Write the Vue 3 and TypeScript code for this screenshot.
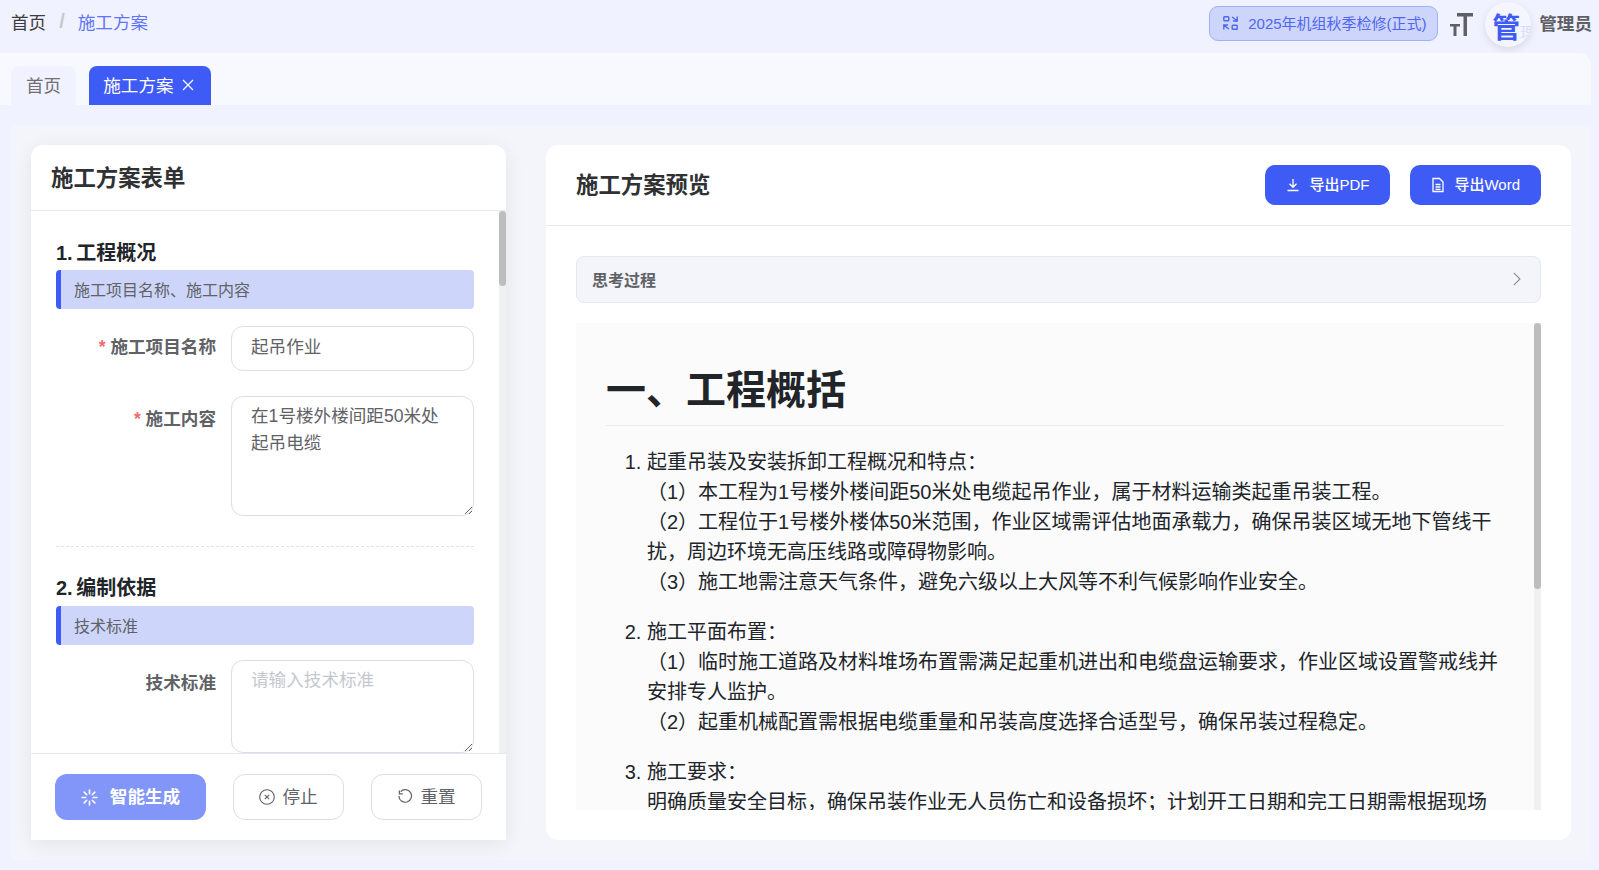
<template>
  <div class="page">
    <header class="topbar">
      <div class="crumbs">
        <span class="crumb">首页</span>
        <span class="crumb-sep">/</span>
        <span class="crumb-now">施工方案</span>
      </div>
      <div class="top-right">
        <div class="project-pill">
          <svg class="pill-icon" viewBox="0 0 15 14" fill="none" stroke="currentColor" stroke-width="1.400">
            <rect x="0.800" y="0.800" width="5" height="4" rx="0.800" />
            <rect x="9.200" y="9.200" width="5" height="4" rx="0.800" />
            <path d="M9 1l5.200 3.800M14.200 0.500v4.500H10" />
            <path d="M6 13 0.800 9.200M0.800 13.500V9H5" />
          </svg>
          <span>2025年机组秋季检修(正式)</span>
        </div>
        <svg class="font-icon" viewBox="0 0 23 23" fill="currentColor">
          <path d="M7 0h16v3.500h-6V23h-3.500V3.500H7z" />
          <path d="M0 11h10v2.500H6.500V23h-3V13.500H0z" />
        </svg>
        <div class="avatar">
          <span class="avatar-first">管</span><span class="avatar-rest">理员</span>
        </div>
        <span class="user-name">管理员</span>
      </div>
    </header>

    <nav class="tabs">
      <div class="tab">首页</div>
      <div class="tab active">
        施工方案
        <svg class="tab-close" viewBox="0 0 12 12" fill="none" stroke="currentColor" stroke-width="1.200">
          <path d="M1 1l10 10M11 1 1 11" />
        </svg>
      </div>
    </nav>

    <main class="content">
      <section class="form-card">
        <div class="form-title">施工方案表单</div>
        <div class="form-body">
          <div class="form-scroll">
            <div v-for="(sec, i) in sections" :key="sec.title" class="form-section">
              <div class="sec-title">{{ i + 1 }}. {{ sec.title }}</div>
              <div class="sec-bar">{{ sec.hint }}</div>
              <div v-for="f in sec.fields" :key="f.label" class="field">
                <label class="field-label" :class="{ 'is-area': f.rows }">
                  <span v-if="f.required" class="req">*</span> {{ f.label }}
                </label>
                <textarea
                  v-if="f.rows"
                  class="field-area"
                  :style="{ height: f.rows + 'px' }"
                  :value="f.value"
                  :placeholder="'请输入' + f.label"
                ></textarea>
                <input v-else class="field-input" :value="f.value" :placeholder="'请输入' + f.label" />
              </div>
            </div>
          </div>
          <div class="scrollbar"><div class="scroll-thumb form-thumb"></div></div>
        </div>
        <div class="form-foot">
          <button class="btn btn-gen">
            <svg class="gen-icon" viewBox="0 0 16 16" fill="none" stroke="currentColor" stroke-width="1.500" stroke-linecap="round">
              <path d="M8 1v3.500M8 11.500V15M1 8h3.500M11.500 8H15M3 3l2.400 2.400M10.600 10.600 13 13M13 3l-2.400 2.400M5.400 10.600 3 13" />
            </svg>
            智能生成
          </button>
          <button class="btn btn-plain">
            <svg class="plain-icon" viewBox="0 0 16 16" fill="none" stroke="currentColor" stroke-width="1.100">
              <circle cx="8" cy="8" r="7.300" />
              <path d="M5.800 5.800l4.400 4.400M10.200 5.800l-4.400 4.400" />
            </svg>
            停止
          </button>
          <button class="btn btn-plain">
            <svg class="plain-icon" viewBox="0 0 16 16" fill="none" stroke="currentColor" stroke-width="1.200">
              <path d="M3.600 2.600A6.300 6.300 0 1 1 1.900 7" />
              <path d="M2.400 1.500v3.400h3.400" />
            </svg>
            重置
          </button>
        </div>
      </section>

      <section class="preview-card">
        <div class="preview-head">
          <div class="preview-title">施工方案预览</div>
          <div class="preview-actions">
            <button class="btn-export">
              <svg class="export-icon" viewBox="0 0 16 16" fill="none" stroke="currentColor" stroke-width="1.300">
                <path d="M8 2v8M4.500 6.800 8 10.300l3.500-3.500M2.500 13.500h11" />
              </svg>
              导出PDF
            </button>
            <button class="btn-export">
              <svg class="export-icon" viewBox="0 0 16 16" fill="none" stroke="currentColor" stroke-width="1.300">
                <path d="M3 1.500h6.500L13 5v9.500H3z" />
                <path d="M5.500 7.500h5M5.500 10h5M5.500 12.300h5" />
              </svg>
              导出Word
            </button>
          </div>
        </div>
        <div class="preview-body">
          <div class="thinking">
            <span>思考过程</span>
            <svg class="chevron" viewBox="0 0 8 14" fill="none" stroke="currentColor" stroke-width="1.100">
              <path d="M0.800 0.800 7 7l-6.200 6.200" />
            </svg>
          </div>
          <div class="doc-wrap">
            <div class="doc">
              <h1 class="doc-h1">一、工程概括</h1>
              <ol class="doc-list">
                <li v-for="item in docItems" :key="item.head">
                  {{ item.head }}<br />
                  <template v-for="line in item.lines" :key="line">{{ line }}<br /></template>
                </li>
              </ol>
            </div>
            <div class="scrollbar"><div class="scroll-thumb doc-thumb"></div></div>
          </div>
        </div>
      </section>
    </main>
  </div>
</template>

<script setup lang="ts">
interface Field {
  label: string
  required?: boolean
  rows?: number
  value?: string
}
interface Section {
  title: string
  hint: string
  fields: Field[]
}

const sections: Section[] = [
  {
    title: '工程概况',
    hint: '施工项目名称、施工内容',
    fields: [
      { label: '施工项目名称', required: true, value: '起吊作业' },
      { label: '施工内容', required: true, rows: 120, value: '在1号楼外楼间距50米处起吊电缆' },
    ],
  },
  {
    title: '编制依据',
    hint: '技术标准',
    fields: [{ label: '技术标准', rows: 93 }],
  },
]

const docItems = [
  {
    head: '起重吊装及安装拆卸工程概况和特点：',
    lines: [
      '（1）本工程为1号楼外楼间距50米处电缆起吊作业，属于材料运输类起重吊装工程。',
      '（2）工程位于1号楼外楼体50米范围，作业区域需评估地面承载力，确保吊装区域无地下管线干扰，周边环境无高压线路或障碍物影响。',
      '（3）施工地需注意天气条件，避免六级以上大风等不利气候影响作业安全。',
    ],
  },
  {
    head: '施工平面布置：',
    lines: [
      '（1）临时施工道路及材料堆场布置需满足起重机进出和电缆盘运输要求，作业区域设置警戒线并安排专人监护。',
      '（2）起重机械配置需根据电缆重量和吊装高度选择合适型号，确保吊装过程稳定。',
    ],
  },
  {
    head: '施工要求：',
    lines: ['明确质量安全目标，确保吊装作业无人员伤亡和设备损坏；计划开工日期和完工日期需根据现场'],
  },
]
</script>

<style>
html,
body {
  margin: 0;
  background: #f1f2ff;
  overflow: hidden;
}
</style>

<style scoped>
.page {
  height: 870px;
  display: flex;
  flex-direction: column;
  font-family: "Liberation Sans", "Noto Sans CJK SC", sans-serif;
  color: #303133;
  background: #f1f2ff;
}

.topbar {
  height: 53px;
  flex: none;
  display: flex;
  align-items: flex-start;
  justify-content: space-between;
  padding: 0 7px 0 11px;
}
.crumbs {
  display: flex;
  align-items: center;
  height: 43px;
  font-size: 17.600px;
}
.crumb {
  color: #3d3d40;
}
.crumb-sep {
  margin: 0 13px;
  color: #c6c9d0;
  font-size: 20px;
  font-weight: 700;
}
.crumb-now {
  color: #5f74f8;
}
.top-right {
  display: flex;
  align-items: center;
  height: 46px;
  margin-top: 1px;
}
.project-pill {
  height: 35px;
  box-sizing: border-box;
  width: 229px;
  display: flex;
  align-items: center;
  gap: 10px;
  padding: 0 0 2px 13px;
  background: #cdd5fa;
  border: 1px solid #9fb0fd;
  border-radius: 9px;
  color: #4f66f0;
  font-size: 15px;
  white-space: nowrap;
  margin-top: -2px;
}
.pill-icon {
  width: 15px;
  height: 14px;
  flex: none;
  margin-top: 2px;
}
.font-icon {
  width: 23px;
  height: 23px;
  color: #5f6066;
  margin: 0 12px;
}
.avatar {
  width: 46px;
  height: 45px;
  border-radius: 50%;
  background: #f4f5fe;
  box-shadow: 0 3px 8px rgba(0, 0, 0, 0.1);
  overflow: hidden;
  white-space: nowrap;
  padding-left: 7px;
  box-sizing: border-box;
  line-height: 54px;
}
.avatar-first {
  font-size: 28px;
  font-weight: 700;
  color: #3f5bf6;
}
.avatar-rest {
  font-size: 15px;
  color: #d6dcfc;
}
.user-name {
  margin: -4px 0 0 8px;
  font-size: 17.600px;
  font-weight: 700;
  color: #5f6066;
}

.tabs {
  height: 52px;
  flex: none;
  box-sizing: border-box;
  margin-right: 8px;
  padding: 13px 0 0 11px;
  display: flex;
  gap: 13px;
  background: #f8f9ff;
  border-radius: 0 12px 0 0;
}
.tab {
  height: 39px;
  box-sizing: border-box;
  padding: 0 15px 2px;
  display: flex;
  align-items: center;
  font-size: 17.600px;
  color: #6f7075;
  background: #f1f2ff;
  border-radius: 8px 8px 0 0;
}
.tab.active {
  padding: 0 17px 2px 14px;
  color: #fff;
  background: #3f5bf6;
}
.tab-close {
  width: 12px;
  height: 12px;
  margin-left: 8px;
}

.content {
  height: 735px;
  flex: none;
  box-sizing: border-box;
  margin: 20px 8px 0 11px;
  padding: 20px;
  display: flex;
  gap: 40px;
  background: #f4f5fb;
}

.form-card {
  width: 475px;
  flex: none;
  display: flex;
  flex-direction: column;
  background: #fff;
  border-radius: 12px 12px 0 0;
  box-shadow: 0 4px 20px rgba(0, 0, 0, 0.07);
}
.form-title {
  height: 66px;
  flex: none;
  box-sizing: border-box;
  border-bottom: 1px solid #e6e7f0;
  padding: 0 0 4px 20px;
  display: flex;
  align-items: center;
  font-size: 22.400px;
  font-weight: 700;
  color: #303133;
}
.form-body {
  flex: 1;
  min-height: 0;
  position: relative;
}
.form-scroll {
  height: 100%;
  box-sizing: border-box;
  overflow: hidden;
  padding: 27px 32px 0 25px;
}
/* headless chrome hides native scrollbars, so they are drawn */
.scrollbar {
  position: absolute;
  top: 0;
  right: 0;
  bottom: 0;
  width: 7px;
  background: #f0f0f0;
}
.scroll-thumb {
  background: #bdbdbd;
  border-radius: 4px;
}
.form-thumb {
  height: 75px;
}
.doc-thumb {
  height: 266px;
}
.form-section + .form-section {
  border-top: 1px dashed #e0e1ea;
  margin-top: 30px;
  padding-top: 26px;
}
.sec-title {
  height: 28px;
  line-height: 30px;
  font-size: 20px;
  font-weight: 700;
  word-spacing: -2px;
  color: #212529;
}
.sec-bar {
  height: 39px;
  margin-top: 4px;
  box-sizing: border-box;
  padding: 0 0 2px 13px;
  display: flex;
  align-items: center;
  background: #cdd5fa;
  border-left: 5px solid #3f5bf6;
  border-radius: 4px;
  font-size: 16px;
  color: #606266;
}
.form-section + .form-section .sec-bar {
  margin-top: 5px;
}
.field {
  margin-top: 15px;
  display: flex;
  gap: 15px;
}
.sec-bar + .field {
  margin-top: 17px;
}
.form-section + .form-section .sec-bar + .field {
  margin-top: 15px;
}
.field + .field {
  margin-top: 25px;
}
.field-label {
  width: 160px;
  flex: none;
  text-align: right;
  font-size: 17.600px;
  font-weight: 700;
  color: #606266;
  line-height: 43px;
}
.field-label.is-area {
  line-height: 26px;
  padding-top: 10px;
}
.req {
  color: #f56c6c;
}
.field-input,
.field-area {
  flex: 1;
  min-width: 0;
  box-sizing: border-box;
  border: 1px solid #dcdde6;
  border-radius: 12px;
  background: #fff;
  font-family: inherit;
  font-size: 17.600px;
  color: #606266;
  outline: none;
}
.field-input {
  height: 45px;
  padding: 0 19px 7px;
}
.field-area {
  display: block;
  padding: 6px 19px;
  line-height: 27px;
  resize: vertical;
}
.field-input::placeholder,
.field-area::placeholder {
  color: #c5c7cf;
}
.form-foot {
  height: 87px;
  flex: none;
  box-sizing: border-box;
  border-top: 1px solid #e6e7f0;
  padding: 20px 0 0 24px;
  display: flex;
  gap: 27px;
  background: #fff;
  position: relative;
}
.btn {
  height: 46px;
  box-sizing: border-box;
  padding: 0 0 3px;
  display: flex;
  align-items: center;
  justify-content: center;
  font-family: inherit;
  font-size: 17.600px;
  border-radius: 12px;
  cursor: pointer;
}
.btn svg {
  margin-top: 3px;
}
.btn-gen {
  width: 151px;
  border: none;
  gap: 12px;
  background: #8296f9;
  color: #fff;
  font-weight: 600;
}
.gen-icon {
  width: 17px;
  height: 17px;
}
.btn-plain {
  width: 111px;
  border: 1px solid #dcdde6;
  background: #fff;
  color: #606266;
  gap: 7px;
}
.plain-icon {
  width: 16px;
  height: 16px;
}

.preview-card {
  flex: 1;
  min-width: 0;
  display: flex;
  flex-direction: column;
  background: #fff;
  border-radius: 12px;
}
.preview-head {
  height: 81px;
  flex: none;
  box-sizing: border-box;
  border-bottom: 1px solid #e8e8ec;
  padding: 0 30px;
  display: flex;
  align-items: center;
  justify-content: space-between;
}
.preview-title {
  margin-top: -4px;
  font-size: 22.400px;
  font-weight: 700;
  color: #303133;
}
.preview-actions {
  display: flex;
  gap: 20px;
}
.btn-export {
  height: 40px;
  padding: 0 21px 3px 20px;
  display: flex;
  align-items: center;
  gap: 8px;
  border: none;
  border-radius: 10px;
  background: #3f5bf6;
  color: #fff;
  font-family: inherit;
  font-size: 15px;
  font-weight: 500;
  cursor: pointer;
}
.export-icon {
  width: 16px;
  height: 16px;
  margin-top: 3px;
}
.preview-body {
  flex: 1;
  min-height: 0;
  display: flex;
  flex-direction: column;
  padding: 30px 30px 30px;
}
.thinking {
  height: 47px;
  flex: none;
  box-sizing: border-box;
  border: 1px solid #e6e7ef;
  border-radius: 8px;
  background: #f4f5fb;
  padding: 0 19px 2px 15px;
  display: flex;
  align-items: center;
  justify-content: space-between;
  font-size: 16px;
  font-weight: 600;
  color: #606266;
}
.chevron {
  width: 8px;
  height: 14px;
  color: #8a8b90;
}
.doc-wrap {
  flex: 1;
  min-height: 0;
  margin-top: 20px;
  position: relative;
}
.doc {
  height: 100%;
  box-sizing: border-box;
  overflow: hidden;
  background: #fbfbfc;
  padding: 0 37px 0 30px;
  color: #212529;
}
.doc-h1 {
  margin: 39px 0 0;
  padding-bottom: 7px;
  border-bottom: 1px solid #eaecef;
  font-size: 40px;
  line-height: 56px;
  font-weight: 700;
  color: #212529;
}
.doc-list {
  margin: 21px 0 0;
  padding-left: 41px;
  font-size: 20px;
  line-height: 30px;
}
.doc-list li + li {
  margin-top: 20px;
}
</style>
